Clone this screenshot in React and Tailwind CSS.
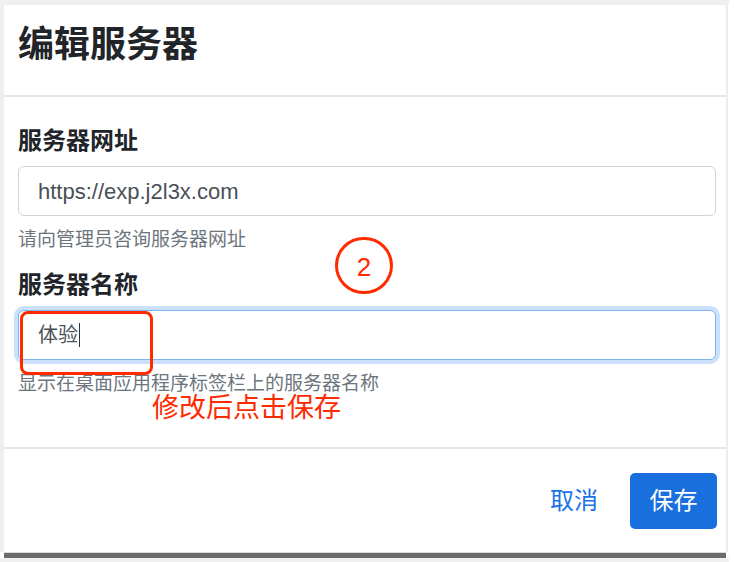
const font = { fontFamily: '"Liberation Sans", "Noto Sans CJK SC", sans-serif' }

const Field = ({ label, value, help, focused, className = '' }) => (
  <div className={className}>
    <div className="text-[24px] leading-[30px] font-bold text-[#212529]">{label}</div>
    <div
      className={`mt-[10px] h-[50px] rounded-[6px] border bg-white flex items-center pl-[19px] text-[22px] text-[#495057] ${
        focused
          ? 'border-[#7fb3ee] shadow-[0_0_0_4px_#cbe0fb]'
          : 'border-[#ced4da]'
      }`}
    >
      <span className={focused ? 'text-[20px]' : ''}>{value}</span>
      {focused && <span className="w-px h-[24px] bg-[#333] ml-px" />}
    </div>
    <div className="mt-[12px] text-[19px] leading-[24px] text-[#6c757d]">{help}</div>
  </div>
)

export default function App() {
  return (
    <div style={font} className="w-[734px] h-[562px] bg-white overflow-hidden flex flex-col">
      <div className="h-[5px] bg-[#f0f0f0] w-[729px]" />
      <div className="flex">
        <div className="w-[4px] bg-[#efefef]" />
        <div className="w-[722px] relative bg-white">
          {/* header */}
          <div className="h-[92px] border-b-2 border-[#e4e7ea] pl-[14px] pt-[19px]">
            <h1 className="text-[36px] leading-[42px] font-bold text-[#212529]">编辑服务器</h1>
          </div>

          {/* body */}
          <div className="h-[350px] pl-[14px] pr-[10px] pt-[29px]">
            <Field label="服务器网址" value="https://exp.j2l3x.com" help="请向管理员咨询服务器网址" />
            <Field
              className="mt-[18px]"
              label="服务器名称"
              value="体验"
              focused
              help="显示在桌面应用程序标签栏上的服务器名称"
            />
          </div>

          {/* footer */}
          <div className="h-[105px] border-t-2 border-[#e4e7ea] flex items-center justify-end pr-[9px] gap-[32px]">
            <button className="text-[24px] text-[#1a73e8]">取消</button>
            <button className="w-[87px] h-[56px] rounded-[5px] bg-[#1a6fdf] text-white text-[24px]">保存</button>
          </div>

          {/* annotations */}
          <div className="absolute left-[16px] top-[306px] w-[133px] h-[64px] rounded-[8px] border-[3.5px] border-[#ff2a00]" />
          <div className="absolute left-[331px] top-[232px] w-[58px] h-[57px] rounded-full border-[3.5px] border-[#ff2a00] flex items-center justify-center pt-[3px] text-[26px] text-[#ff2a00]">
            2
          </div>
          <div className="absolute left-[148px] top-[387px] text-[27px] leading-[32px] text-[#ff2a00]">修改后点击保存</div>
        </div>
        <div className="w-[2px] bg-[#ececec]" />
      </div>
      <div className="ml-[4px] w-[722px] h-px bg-[#d8d8d8]" />
      <div className="ml-[4px] w-[722px] h-[5px] bg-[#6b6b6b]" />
      <div className="h-[4px] w-[729px] bg-[#f0f0f0]" />
    </div>
  )
}
